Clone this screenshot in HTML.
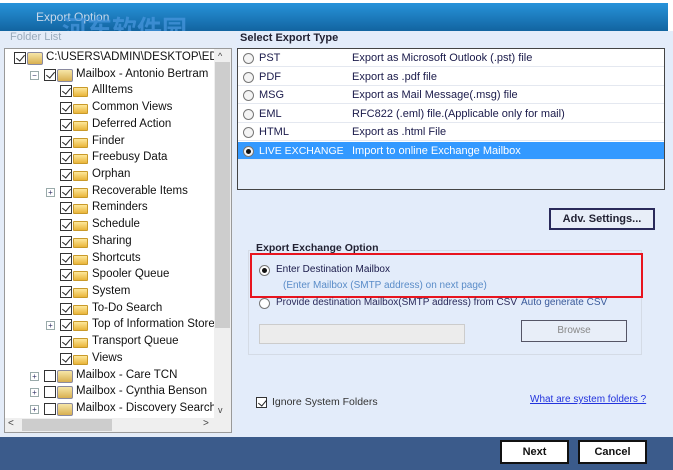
<!DOCTYPE html><html><head><meta charset="utf-8"><style>
*{margin:0;padding:0;box-sizing:border-box}
html,body{width:673px;height:470px;overflow:hidden}
body{background:#fff;font-family:"Liberation Sans","Noto Sans CJK SC",sans-serif;font-size:11px;color:#1a1a3a;position:relative}
.a{position:absolute;white-space:nowrap}
.cb{position:absolute;width:12px;height:12px;border:1px solid #333;background:#fff}
.cb.c::after{content:"";position:absolute;left:3px;top:0px;width:4px;height:7px;border:solid #222;border-width:0 1.5px 1.5px 0;transform:rotate(40deg)}
.fd{position:absolute;width:15px;height:10px;background:linear-gradient(#fde79a,#e9b53a);border:1px solid #c99a2a;border-radius:1px}
.mb{position:absolute;width:16px;height:13px;background:linear-gradient(#f6e6a8,#d8b050);border:1px solid #8a8aa0;border-radius:2px}
.rd{position:absolute;width:11px;height:11px;border-radius:50%;border:1px solid #777;background:#f4f4f4}
.rd.s::after{content:"";position:absolute;left:2px;top:2px;width:5px;height:5px;border-radius:50%;background:#111}
.row{position:absolute;left:1px;width:426px;height:18px;border-bottom:1px solid #e4e8f0}
.pl{position:absolute;width:9px;height:9px;border:1px solid #9aa;background:#fff;font-size:8px;line-height:7px;text-align:center;color:#336}
</style></head><body>
<div class="a" style="left:0;top:3px;width:668px;height:28px;background:linear-gradient(#2793da,#1264a0)"></div>
<div class="a" style="left:36px;top:10px;color:#c8d8ea;font-size:12px">Export Option</div>
<div class="a" style="left:62px;top:10px;color:#4a98e0;font-size:25px;font-weight:bold;opacity:.7;font-family:'Noto Sans CJK SC',sans-serif">河东软件园</div>
<div class="a" style="left:0;top:31px;width:236px;height:406px;background:#e4ecf8"></div>
<div class="a" style="left:236px;top:31px;width:437px;height:406px;background:#e3ecfa"></div>
<div class="a" style="left:10px;top:31px;color:#9ab;font-size:11px">Folder List</div>
<div class="a" style="left:4px;top:48px;width:228px;height:385px;background:#fff;border:1px solid #999"></div>
<div class="a" style="left:5px;top:49px;width:209px;height:369px;overflow:hidden"><div style="position:absolute;left:-5px;top:-49px;width:214px;height:418px"><div id="tree"></div></div></div>
<div class="a" style="left:214px;top:49px;width:17px;height:369px;background:#efefef"></div>
<div class="a" style="left:215px;top:62px;width:15px;height:266px;background:#cdcdcd"></div>
<div class="a" style="left:5px;top:418px;width:226px;height:14px;background:#efefef"></div>
<div class="a" style="left:22px;top:419px;width:90px;height:12px;background:#cdcdcd"></div>
<div class="a" style="left:218px;top:51px;font-size:9px;color:#444">^</div>
<div class="a" style="left:218px;top:405px;font-size:9px;color:#444">v</div>
<div class="a" style="left:8px;top:418px;font-size:10px;color:#444">&lt;</div>
<div class="a" style="left:203px;top:418px;font-size:10px;color:#444">&gt;</div>
<div class="a" style="left:240px;top:32px;font-weight:bold;font-size:11px;color:#223">Select Export Type</div>
<div class="a" style="left:237px;top:48px;width:428px;height:142px;background:#e6eefa;border:1px solid #444"></div>
<div class="a" style="left:238px;top:49px;width:426px;height:110px;background:#fff"></div>
<div id="rows"></div>
<div class="a" style="left:549px;top:208px;width:106px;height:22px;border:2px solid #2a2a5a;background:#e8eef8;text-align:center;line-height:18px;font-weight:bold;color:#223">Adv. Settings...</div>
<div class="a" style="left:248px;top:250px;width:394px;height:105px;border:1px solid #d4dbe6"></div>
<div class="a" style="left:256px;top:242px;font-weight:bold;font-size:10.5px;color:#223;background:#e3ecfa">Export Exchange Option</div>
<div class="a" style="left:250px;top:253px;width:393px;height:45px;border:2px solid #e8141e"></div>
<div class="rd s" style="left:259px;top:265px;background:#fff"></div>
<div class="a" style="left:276px;top:264px;color:#1a1a4a;font-size:10px">Enter Destination Mailbox</div>
<div class="a" style="left:283px;top:280px;color:#5a8cc8;font-size:10px">(Enter Mailbox (SMTP address) on next page)</div>
<div class="rd" style="left:259px;top:298px;background:#fff"></div>
<div class="a" style="left:276px;top:297px;color:#2a2a5a;font-size:10px">Provide destination Mailbox(SMTP address) from CSV</div>
<div class="a" style="left:521px;top:297px;color:#3a5a9a;font-size:10px">Auto generate CSV</div>
<div class="a" style="left:259px;top:324px;width:206px;height:20px;background:#ececec;border:1px solid #ccc"></div>
<div class="a" style="left:521px;top:320px;width:106px;height:22px;border:1px solid #556;background:#e8eef8;text-align:center;line-height:20px;color:#888;font-size:10px">Browse</div>
<div class="cb c" style="left:256px;top:397px;width:11px;height:11px"></div>
<div class="a" style="left:272px;top:396px;color:#333;font-size:10.5px">Ignore System Folders</div>
<div class="a" style="left:530px;top:394px;color:#2233dd;text-decoration:underline;font-size:10px">What are system folders ?</div>
<div class="a" style="left:0;top:437px;width:673px;height:33px;background:#3b5b8b"></div>
<div class="a" style="left:500px;top:440px;width:69px;height:24px;border:2px solid #111;background:#fff;text-align:center;line-height:20px;font-weight:bold;color:#111">Next</div>
<div class="a" style="left:578px;top:440px;width:69px;height:24px;border:2px solid #111;background:#fff;text-align:center;line-height:20px;font-weight:bold;color:#111">Cancel</div>
<script>
var t='',ys=[59,76,92,109,126,143,159,176,193,209,226,243,260,276,293,310,326,343,360,377,393,410];
var it=[[0,'C:\\USERS\\ADMIN\\DESKTOP\\ED',1,1],[1,'Mailbox - Antonio Bertram',1,1]];
'AllItems,Common Views,Deferred Action,Finder,Freebusy Data,Orphan,Recoverable Items,Reminders,Schedule,Sharing,Shortcuts,Spooler Queue,System,To-Do Search,Top of Information Store,Transport Queue,Views'.split(',').forEach(function(n){it.push([2,n,1,(n=='Recoverable Items'||n=='Top of Information Store')?1:0])});
['Mailbox - Care TCN','Mailbox - Cynthia Benson','Mailbox - Discovery Search M'].forEach(function(n){it.push([1,n,0,1])});
it.forEach(function(r,i){var y=ys[i]-7,l=r[0];
var cx=[14,44,60][l];
if(r[3])t+='<div class="pl" style="left:'+(cx-14+(l==0?-4:0))+'px;top:'+(y+2)+'px">'+(l<2&&i<2?'−':'+')+'</div>';
t+='<div class="cb'+(r[2]?' c':'')+'" style="left:'+cx+'px;top:'+y+'px"></div>';
t+=(l==2?'<div class="fd" style="left:'+(cx+13)+'px;top:'+(y+2)+'px"></div>':'<div class="mb" style="left:'+(cx+13)+'px;top:'+y+'px"></div>');
t+='<div class="a" style="left:'+(cx+32)+'px;top:'+(y-1)+'px;font-size:11.5px;color:#111">'+r[1]+'</div>';});
document.getElementById('tree').outerHTML=t;
var rs=[['PST','Export as Microsoft Outlook (.pst) file'],['PDF','Export as .pdf file'],['MSG','Export as Mail Message(.msg) file'],['EML','RFC822 (.eml) file.(Applicable only for mail)'],['HTML','Export as .html File'],['LIVE EXCHANGE','Import to online Exchange Mailbox']];
var h='';rs.forEach(function(r,i){var y=49+i*18.6,s=i==5;
h+='<div class="row" style="left:238px;top:'+y+'px;'+(s?'background:#3399ff;color:#fff':'color:#1a1a4a')+'"><div class="rd'+(s?' s':'')+'" style="left:5px;top:4px"></div><span class="a" style="left:21px;top:3px'+(s?';font-size:10.5px':'')+'">'+r[0]+'</span><span class="a" style="left:114px;top:3px">'+r[1]+'</span></div>';});
document.getElementById('rows').outerHTML=h;
</script>
</body></html>
